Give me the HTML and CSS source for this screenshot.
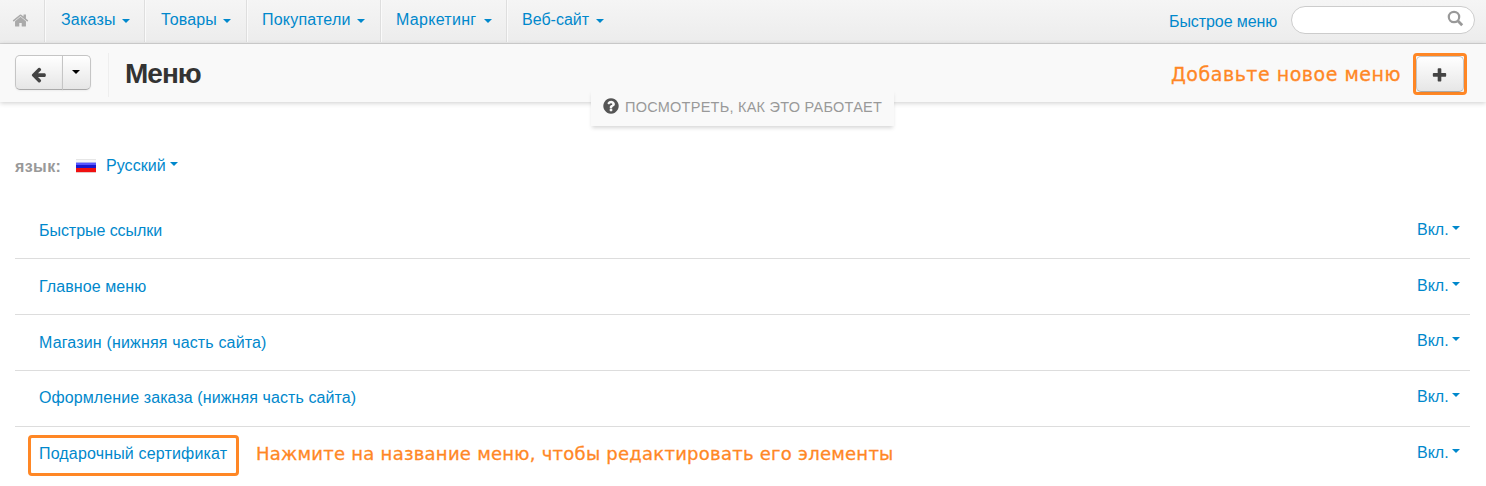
FILE: index.html
```html
<!DOCTYPE html>
<html lang="ru">
<head>
<meta charset="utf-8">
<title>Меню</title>
<link rel="stylesheet" href="styles.css">
</head>
<body>
<header class="navbar">
  <nav class="nav">
    <a class="nav-home"><svg width="17" height="17" viewBox="0 0 1792 1792"><path d="M1472 992v480q0 26-19 45t-45 19h-384v-384h-256v384h-384q-26 0-45-19t-19-45v-480q0-1 .5-3t.5-3l575-474 575 474q1 2 1 6zm223-69l-62 74q-8 9-21 11h-3q-13 0-21-7l-692-577-692 577q-12 8-24 7-13-2-21-11l-62-74q-8-10-7-23.5t11-21.5l719-599q32-26 76-26t76 26l244 204v-195q0-14 9-23t23-9h192q14 0 23 9t9 23v408l219 182q10 8 11 21.5t-7 23.5z"/></svg></a>
    <a class="nav-item orders"><span>Заказы</span><i class="caret"></i></a>
    <a class="nav-item products"><span>Товары</span><i class="caret"></i></a>
    <a class="nav-item customers"><span>Покупатели</span><i class="caret"></i></a>
    <a class="nav-item marketing"><span>Маркетинг</span><i class="caret"></i></a>
    <a class="nav-item website"><span>Веб-сайт</span><i class="caret"></i></a>
  </nav>
  <a class="quick-menu"><span>Быстрое меню</span></a>
  <div class="search"><svg width="17" height="17" viewBox="0 0 17 17"><circle cx="7" cy="7" r="5.2"/><path d="M11 11l4.2 4.2"/></svg></div>
</header>
<section class="actions">
  <div class="btn-group">
    <button class="btn btn-back"><svg width="17" height="17" viewBox="0 0 1792 1792"><path d="M1664 896v128q0 53-32.5 90.5t-84.5 37.5h-704l293 294q38 36 38 90t-38 90l-75 76q-37 37-90 37-52 0-91-37l-651-652q-37-37-37-90 0-52 37-91l651-650q38-38 91-38 52 0 90 38l75 74q38 38 38 91t-38 91l-293 293h704q52 0 84.5 37.5t32.5 90.5z"/></svg></button>
    <button class="btn btn-drop"><i class="caret"></i></button>
  </div>
  <h1 class="title"><span>Меню</span></h1>
  <span class="note note-add">Добавьте новое меню</span>
  <div class="highlight highlight-btn"><button class="btn btn-add"><svg width="17" height="17" viewBox="0 0 1792 1792"><path d="M1600 736v192q0 40-28 68t-68 28h-416v416q0 40-28 68t-68 28h-192q-40 0-68-28t-28-68v-416h-416q-40 0-68-28t-28-68v-192q0-40 28-68t68-28h416v-416q0-40 28-68t68-28h192q40 0 68 28t28 68v416h416q40 0 68 28t28 68z"/></svg></button></div>
  <a class="how-tab"><svg width="17" height="17" viewBox="0 0 1792 1792"><path d="M1024 1376v-192q0-14-9-23t-23-9h-192q-14 0-23 9t-9 23v192q0 14 9 23t23 9h192q14 0 23-9t9-23zm256-672q0-88-55.5-163t-138.5-116-170-41q-243 0-371 213-15 24 8 42l132 100q7 6 19 6 16 0 25-12 53-68 86-92 34-24 86-24 48 0 85.5 26t37.5 59q0 38-20 61t-68 45q-63 28-115.5 86.5t-52.5 125.5v36q0 14 9 23t23 9h192q14 0 23-9t9-23q0-19 21.5-49.5t54.5-49.5q32-18 49-28.5t46-35 44.5-48 28-60.5 12.5-81zm384 192q0 209-103 385.5t-279.5 279.5-385.5 103-385.5-103-279.5-279.5-103-385.5 103-385.5 279.5-279.5 385.5-103 385.5 103 279.5 279.5 103 385.5z"/></svg><span>ПОСМОТРЕТЬ, КАК ЭТО РАБОТАЕТ</span></a>
</section>
<main class="content">
  <div class="language">
    <span class="language-label">язык:</span>
    <i class="flag"></i>
    <a class="language-name">Русский</a><i class="caret"></i>
  </div>
  <div class="list">
    <div class="row"><a class="name n1">Быстрые ссылки</a><a class="status">Вкл.<i class="caret"></i></a></div>
    <div class="row"><a class="name n2">Главное меню</a><a class="status">Вкл.<i class="caret"></i></a></div>
    <div class="row up"><a class="name n3">Магазин (нижняя часть сайта)</a><a class="status">Вкл.<i class="caret"></i></a></div>
    <div class="row up"><a class="name n4">Оформление заказа (нижняя часть сайта)</a><a class="status">Вкл.<i class="caret"></i></a></div>
    <div class="row last"><div class="highlight highlight-name"><a class="name n5">Подарочный сертификат</a></div><span class="note note-edit">Нажмите на название меню, чтобы редактировать его элементы</span><a class="status">Вкл.<i class="caret"></i></a></div>
  </div>
</main>
</body>
</html>
```
FILE: styles.css
```css
* { box-sizing: border-box; }
body {
  margin: 0;
  height: 486px;
  overflow: hidden;
  background: #fff;
  color: #08c;
  font: 16px/20px "Liberation Sans", Arial, sans-serif;
  white-space: nowrap;
}
svg { display: block; fill: currentColor; flex: none; }
.caret {
  display: block;
  flex: none;
  border: 4px solid transparent;
  border-top-color: currentColor;
  border-bottom: 0;
}
.navbar {
  display: flex;
  height: 44px;
  padding-right: 11px;
  border-bottom: 1px solid #d4d4d4;
  background: linear-gradient(#f5f5f5, #ececec);
}
.nav { display: flex; flex: 1; height: 42px; }
.nav-home {
  width: 45px;
  padding: 12px 0 0 12px;
  border-right: 1px solid #dedede;
  color: #aaa;
}
.nav-item {
  display: flex;
  justify-content: space-between;
  padding: 10px 15px 0 15px;
  border-left: 1px solid #fafafa;
  border-right: 1px solid #dedede;
}
.nav-item .caret { margin-top: 9px; }
.orders { width: 100px; padding-right: 14px; letter-spacing: .2px; }
.products { width: 102px; letter-spacing: .15px; }
.customers { width: 134px; padding-left: 14px; letter-spacing: .2px; }
.marketing { width: 126px; padding-left: 14px; padding-right: 14px; letter-spacing: .3px; }
.website { width: 112px; border-right: 0; padding-left: 14px; }
.quick-menu { width: 122px; padding-top: 12px; letter-spacing: -.08px; }
.search {
  width: 184px;
  height: 28px;
  margin-top: 6px;
  padding: 3px 0 0 155px;
  border: 1px solid #ccc;
  border-radius: 14px;
  background: #fff;
  color: #999;
}
.search svg { fill: none; stroke: currentColor; stroke-width: 2.2; }
.search path { stroke-width: 2.8; }
.actions {
  position: relative;
  display: flex;
  align-items: flex-start;
  height: 58px;
  padding: 9px 19px 0 15px;
  background: #f9f9f9;
  box-shadow: 0 1px 5px rgba(0,0,0,.2);
}
.btn-group { display: flex; margin-top: 2px; }
.btn {
  display: flex;
  align-items: center;
  justify-content: center;
  height: 35px;
  padding: 3px 1px 0 0;
  border: 1px solid #c5c5c5;
  border-bottom-color: #aaa;
  border-radius: 5px;
  background: linear-gradient(#fff, #e6e6e6);
  color: #444;
  box-shadow: 0 1px 2px rgba(0,0,0,.05);
}
.btn-back { width: 48px; border-radius: 5px 0 0 5px; }
.btn-drop { width: 29px; margin-left: -1px; padding: 0 2px 1px 0; border-radius: 0 5px 5px 0; color: #000; }
.title {
  flex: 1;
  height: 44px;
  margin: 0 0 0 17px;
  padding-left: 16px;
  border-left: 1px solid #eee;
  color: #333;
  font-size: 28px;
  line-height: 41px;
}
.title span { letter-spacing: -1px; }
.note { color: #ff8725; font-family: "DejaVu Sans", sans-serif; font-size: 18px; -webkit-text-stroke: .3px #ff8725; }
.note-add { width: 242px; padding-top: 11px; font-size: 19px; letter-spacing: .52px; }
.highlight { border: 3px solid #ff8725; border-radius: 4px; }
.highlight-btn { width: 54px; height: 42px; }
.btn-add { width: 48px; height: 36px; padding: 2px 2px 0 0; }
.how-tab {
  position: absolute;
  left: 591px;
  top: 46px;
  display: flex;
  width: 303px;
  height: 36px;
  padding: 8px 0 0 12px;
  background: #f9f9f9;
  color: #999;
  font-size: 14.5px;
  line-height: 19px;
  letter-spacing: .25px;
  box-shadow: 0 3px 4px -1px rgba(0,0,0,.16);
}
.how-tab svg { margin: -1px 5px 0 -1px; width: 18px; height: 18px; color: #555; }
.content { padding: 53px 16px 0 15px; }
.language { display: flex; height: 48px; }
.language-label { width: 61px; padding-top: 2px; color: #999; font-weight: bold; letter-spacing: .4px; }
.language-name { padding-top: 1px; letter-spacing: .05px; }
.flag {
  width: 20px;
  height: 14px;
  margin: 4px 10px 0 0;
  background: linear-gradient(#e6e6e6 0 1px, #f6f6f6 1px 3px, #aab0f0 3px 4px, #5858ff 4px 6px, #1818d0 6px 9px, #f01010 9px 13px, #e6c8c8 13px);
}
.language .caret { margin: 7px 0 0 4px; }
.row { display: flex; height: 56px; padding-left: 24px; border-bottom: 1px solid #ddd; }
.row .name { padding-top: 18px; }
.row .status { display: flex; width: 53px; margin-left: auto; padding-top: 17px; }
.status .caret { margin: 6px 0 0 3px; }
.up .status { padding-top: 16px; }
.n1 { letter-spacing: -.05px; }
.n2 { letter-spacing: .08px; }
.n3 { letter-spacing: .16px; }
.row .n4 { padding-top: 17px; letter-spacing: .09px; }
.n5 { letter-spacing: .16px; }
.last { height: 60px; padding-left: 13px; border: 0; }
.last .status { padding-top: 16px; }
.highlight-name { width: 211px; height: 41px; margin-top: 8px; padding-left: 8px; }
.last .highlight-name .name { display: block; padding-top: 6px; }
.note-edit { padding: 17px 0 0 17px; letter-spacing: .25px; }
```
